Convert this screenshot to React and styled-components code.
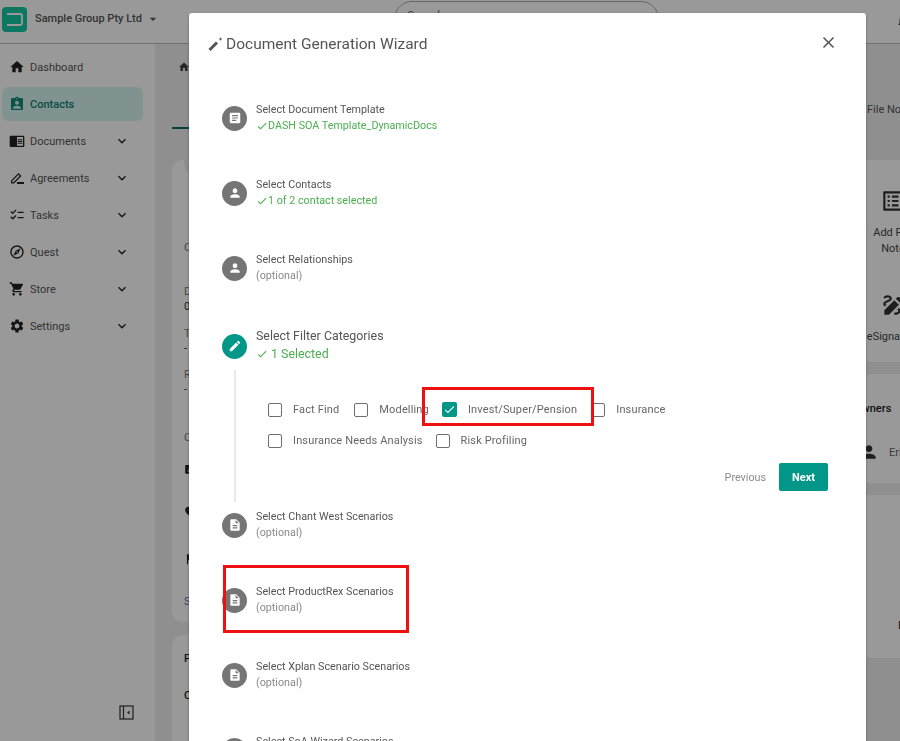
import React from "react"
import styled, { createGlobalStyle } from "styled-components"
import { MdHome, MdAssignmentInd, MdClose, MdPerson, MdEdit, MdCheck, MdDescription, MdArticle, MdShoppingCart, MdSettings, MdExpandMore, MdArrowDropDown, MdOutlineExplore, MdChecklist, MdListAlt, MdDraw, MdChromeReaderMode, MdBadge, MdFavorite, MdFlag, MdNotifications } from "react-icons/md"

const Global = createGlobalStyle`
	html, body { margin: 0; padding: 0; height: 100%; overflow: hidden; }
	body { font-family: Roboto, "Liberation Sans", sans-serif; color: #333; background: #fff; }
	* { box-sizing: border-box; }
`

const Page = styled.div`
	height: 741px;
	width: 900px;
	overflow: hidden;
	display: flex;
	flex-direction: column;
	background: #fff;
`

const Topbar = styled.header`
	height: 44px;
	flex: none;
	display: flex;
	align-items: center;
	padding-left: 2px;
	border-bottom: 1px solid #bbb;
	overflow: hidden;
`

const Logo = styled.svg`
	width: 25px;
	height: 25px;
	flex: none;
	margin-top: -5px;
`

const Company = styled.span`
	margin: -6px 0 0 8px;
	font-size: 11px;
	font-weight: 500;
	color: #555;
	white-space: nowrap;
	flex: none;
`

const Caret = styled(MdArrowDropDown)`
	flex: none;
	font-size: 16px;
	color: #555;
	margin: -6px 0 0 3px;
`

const Search = styled.div`
	margin: -6px 0 0 233px;
	width: 265px;
	height: 36px;
	border: 1px solid #aaa;
	border-radius: 18px;
	flex: none;
	padding: 7px 12px;
	font-size: 12px;
	color: #777;
`

const TopIcon = styled(MdNotifications)`
	flex: none;
	margin: -2px 0 0 237px;
	font-size: 14px;
	color: #444;
`

const Body = styled.div`
	flex: 1;
	display: flex;
	min-height: 0;
`

const Sidebar = styled.nav`
	width: 155px;
	flex: none;
	padding-top: 6px;
	display: flex;
	flex-direction: column;
	gap: 3px;
	position: relative;
`

const NavItem = styled.div`
	height: 34px;
	margin: 0 12px 0 2px;
	padding: 0 13px 0 7px;
	border-radius: 7px;
	display: flex;
	align-items: center;
	font-size: 11px;
	color: ${props => (props.active ? "#0f7f6f" : "#555")};
	background: ${props => (props.active ? "#d5f5f1" : "transparent")};
	font-weight: ${props => (props.active ? 500 : 400)};
	> svg:first-child {
		width: 16px;
		height: 16px;
		color: ${props => (props.active ? "#0f8a78" : "#222")};
		margin-right: 5px;
		flex: none;
	}
`

const NavLabel = styled.span`
	flex: 1;
`

const Collapse = styled.svg`
	position: absolute;
	left: 119px;
	bottom: 21px;
	width: 15px;
	height: 15px;
`

const Main = styled.main`
	flex: 1;
	min-width: 0;
	background: #eee;
	padding: 0 0 0 17px;
	overflow: hidden;
`

const Crumb = styled.div`
	height: 46px;
	padding: 17px 0 0 6px;
	color: #444;
	font-size: 12px;
`

const Tabs = styled.div`
	height: 39px;
	display: flex;
	align-items: center;
	font-size: 11px;
	color: #555;
`

const ActiveTab = styled.div`
	width: 100px;
	height: 39px;
	flex: none;
	border-bottom: 2px solid #0f6f60;
`

const TabLabel = styled.span`
	white-space: nowrap;
	margin-left: 595px;
`

const Columns = styled.div`
	display: grid;
	grid-template-columns: 600px 300px;
	column-gap: 24px;
	margin-top: 31px;
	align-items: start;
`

const Stack = styled.div`
	display: flex;
	flex-direction: column;
`

const Card = styled.section`
	background: #fff;
	border-radius: 10px;
	height: ${props => props.h}px;
	margin-bottom: ${props => props.mb || 12}px;
	padding: ${props => props.pad || "0"};
	font-size: 11px;
	color: #666;
	position: relative;
	overflow: hidden;
`

const Avatar = styled.div`
	position: absolute;
	left: 12px;
	top: -20px;
	width: 42px;
	height: 42px;
	border-radius: 50%;
	background: #eee;
`

const Field = styled.div`
	line-height: 13px;
	margin-bottom: ${props => props.mb || 0}px;
	color: ${props => props.color || "#777"};
	font-weight: ${props => props.weight || 400};
`

const InfoIcon = styled.div`
	height: 14px;
	font-size: 14px;
	color: #222;
	margin-bottom: ${props => props.mb}px;
	svg { display: block; }
`

const ActionGrid = styled.div`
	display: grid;
	grid-template-columns: 90px;
	row-gap: 35px;
	padding: 28px 0 0 52px;
`

const Action = styled.div`
	display: flex;
	flex-direction: column;
	align-items: center;
	text-align: center;
	font-size: 11px;
	line-height: 16px;
	color: #444;
	svg { font-size: 26px; color: #333; margin-bottom: 11px; }
`

const OwnerRow = styled.div`
	display: flex;
	align-items: center;
	gap: 10px;
	margin-top: 27px;
	padding-left: 5px;
	color: #666;
	svg { font-size: 20px; color: #333; flex: none; }
`

const Backdrop = styled.div`
	position: fixed;
	inset: 0;
	background: rgba(0, 0, 0, 0.4);
	overflow: hidden;
`

const Modal = styled.div`
	position: absolute;
	left: 189px;
	top: 13px;
	width: 677px;
	height: 800px;
	background: #fff;
	border-radius: 3px;
	box-shadow: 0 1px 3px rgba(0, 0, 0, 0.35);
`

const ModalHead = styled.div`
	height: 60px;
	display: flex;
	align-items: center;
	padding: 1px 28px 0 18px;
`

const ModalTitle = styled.h2`
	flex: 1;
	margin: 0;
	font-size: 15.5px;
	font-weight: 400;
	color: #555;
	display: flex;
	align-items: center;
	gap: 3px;
`

const Wand = styled.svg`
	width: 16px;
	height: 16px;
	flex: none;
`

const Close = styled(MdClose)`
	font-size: 19px;
	color: #555;
	margin-top: -3px;
`

const Steps = styled.div`
	padding: 28px 33px 0 33px;
	display: flex;
	flex-direction: column;
`

const Step = styled.div`
	display: flex;
	align-items: center;
	gap: 9px;
	height: 34px;
	margin-bottom: ${props => props.mb ?? 41}px;
`

const StepIcon = styled.div`
	width: 25px;
	height: 25px;
	border-radius: 50%;
	flex: none;
	background: ${props => (props.current ? "#009688" : "#757575")};
	color: #fff;
	display: flex;
	align-items: center;
	justify-content: center;
	font-size: 14px;
`

const StepText = styled.div`
	font-size: ${props => (props.current ? "12.4px" : "10.75px")};
	line-height: 16px;
	color: #555;
`

const StepSub = styled.div`
	font-size: ${props => (props.current ? "12.4px" : "10.75px")};
	line-height: ${props => (props.current ? "20px" : "16px")};
	color: ${props => (props.done ? "#4caf50" : "#8a8a8a")};
	display: flex;
	align-items: center;
	gap: ${props => (props.current ? "3px" : "0")};
	svg { font-size: 12px; }
`

const StepBody = styled.div`
	margin: 7px 0 6px 12px;
	border-left: 2px solid #e8e8e8;
	height: 132px;
	padding: 24px 5px 0 32px;
`

const CheckRow = styled.div`
	display: flex;
	align-items: center;
	height: 31px;
`

const CheckItem = styled.label`
	display: flex;
	align-items: center;
	font-size: 11px;
	color: #666;
	letter-spacing: 0.15px;
	white-space: nowrap;
	margin-right: ${props => props.mr || 0}px;
`

const Box = styled.span`
	width: ${props => (props.checked ? 15 : 14)}px;
	height: ${props => (props.checked ? 15 : 14)}px;
	flex: none;
	margin-right: ${props => props.gap || 11}px;
	border: ${props => (props.checked ? "0" : "1.5px solid #6e6e6e")};
	border-radius: 2px;
	background: ${props => (props.checked ? "#009688" : "#fff")};
	color: #fff;
	display: flex;
	align-items: center;
	justify-content: center;
	font-size: 13px;
`

const Actions = styled.div`
	display: flex;
	justify-content: flex-end;
	align-items: center;
	gap: 13px;
	margin-top: 7px;
`

const Prev = styled.span`
	font-size: 10.75px;
	color: #8a8a8a;
`

const Next = styled.button`
	width: 49px;
	height: 28px;
	border: 0;
	border-radius: 2px;
	background: #009688;
	color: #fff;
	font: 700 11px Roboto, sans-serif;
`

const Highlight = styled.div`
	position: absolute;
	left: ${props => props.x}px;
	top: ${props => props.y}px;
	width: ${props => props.w}px;
	height: ${props => props.h}px;
	border: 3px solid #ee1111;
	pointer-events: none;
`

const PenIcon = () => (
	<svg viewBox="0 0 16 16">
		<path d="M2 13.5v-3L9.5 3l3 3L5 13.5zM3.2 12.3h1.2l6.4-6.3-1.3-1.3-6.3 6.4z" fill="currentColor" fillRule="evenodd" />
		<rect x="8" y="12" width="7" height="2" fill="currentColor" />
	</svg>
)

const nav = [
	{ label: "Dashboard", icon: MdHome },
	{ label: "Contacts", icon: MdAssignmentInd, active: true },
	{ label: "Documents", icon: MdChromeReaderMode, more: true },
	{ label: "Agreements", icon: PenIcon, more: true },
	{ label: "Tasks", icon: MdChecklist, more: true },
	{ label: "Quest", icon: MdOutlineExplore, more: true },
	{ label: "Store", icon: MdShoppingCart, more: true },
	{ label: "Settings", icon: MdSettings, more: true }
]

const optional = ["Select Chant West Scenarios", "Select ProductRex Scenarios", "Select Xplan Scenario Scenarios", "Select SoA Wizard Scenarios"]

const App = () => (
	<>
		<Global />
		<Page>
			<Topbar>
				<Logo viewBox="0 0 25 25">
					<rect width="25" height="25" rx="4" fill="#15c9a2" />
					<path d="M5 7h13a2 2 0 0 1 2 2v7a2 2 0 0 1-2 2H5" fill="none" stroke="#fff" strokeWidth="1.8" />
				</Logo>
				<Company>Sample Group Pty Ltd</Company>
				<Caret />
				<Search>Search</Search>
				<TopIcon />
			</Topbar>
			<Body>
				<Sidebar>
					{nav.map(item => (
						<NavItem key={item.label} active={item.active}>
							<item.icon />
							<NavLabel>{item.label}</NavLabel>
							{item.more && <MdExpandMore size={16} color="#222" />}
						</NavItem>
					))}
					<Collapse viewBox="0 0 15 15">
						<rect x="1" y="1" width="13" height="13" fill="none" stroke="#333" strokeWidth="1.2" />
						<path d="M4.5 1v13" stroke="#333" strokeWidth="1.2" />
						<path d="M10.5 5.5v4L8 7.5z" fill="#333" />
					</Collapse>
				</Sidebar>
				<Main>
					<Crumb><MdHome /></Crumb>
					<Tabs>
						<ActiveTab />
						<TabLabel>File Notes</TabLabel>
					</Tabs>
					<Columns>
						<Stack>
							<Card h={462} mb={13} pad="81px 0 0 12px">
								<Avatar />
								<Field mb={31}>C</Field>
								<Field mb={2}>D</Field>
								<Field mb={14} color="#333">0</Field>
								<Field mb={2}>T</Field>
								<Field mb={13} color="#333">-</Field>
								<Field mb={2}>R</Field>
								<Field mb={35} color="#333">-</Field>
								<Field mb={17}>C</Field>
								<InfoIcon mb={30}><MdBadge /></InfoIcon>
								<InfoIcon mb={33}><MdFavorite /></InfoIcon>
								<InfoIcon mb={29}><MdFlag /></InfoIcon>
								<Field color="#3f6fc4">S</Field>
							</Card>
							<Card h={200} pad="17px 0 0 12px">
								<Field mb={24} color="#222" weight={500}>P</Field>
								<Field color="#222" weight={500}>C</Field>
							</Card>
						</Stack>
						<Stack>
							<Card h={202}>
								<ActionGrid>
									<Action><MdListAlt />Add File<br />Note</Action>
									<Action><MdDraw />eSignature</Action>
								</ActionGrid>
							</Card>
							<Card h={109} pad="28px 0 0 58px">
								<Field color="#222" weight={500}>Owners</Field>
								<OwnerRow><MdPerson />Eric</OwnerRow>
							</Card>
							<Card h={163} pad="124px 0 0 102px">
								<Field color="#222">D</Field>
							</Card>
						</Stack>
					</Columns>
				</Main>
			</Body>
			<Backdrop>
				<Modal>
					<ModalHead>
						<ModalTitle>
							<Wand viewBox="0 0 16 16">
								<path d="M2.5 14 10 6.5" stroke="#555" strokeWidth="3" fill="none" />
								<path d="M13.5 1.5v3M12 3h3" stroke="#555" strokeWidth="0.9" fill="none" />
							</Wand>
							Document Generation Wizard
						</ModalTitle>
						<Close />
					</ModalHead>
					<Steps>
						<Step>
							<StepIcon><MdArticle /></StepIcon>
							<div>
								<StepText>Select Document Template</StepText>
								<StepSub done><MdCheck />DASH SOA Template_DynamicDocs</StepSub>
							</div>
						</Step>
						<Step>
							<StepIcon><MdPerson /></StepIcon>
							<div>
								<StepText>Select Contacts</StepText>
								<StepSub done><MdCheck />1 of 2 contact selected</StepSub>
							</div>
						</Step>
						<Step mb={44}>
							<StepIcon><MdPerson /></StepIcon>
							<div>
								<StepText>Select Relationships</StepText>
								<StepSub>(optional)</StepSub>
							</div>
						</Step>
						<Step mb={0}>
							<StepIcon current><MdEdit /></StepIcon>
							<div>
								<StepText current>Select Filter Categories</StepText>
								<StepSub done current><MdCheck />1 Selected</StepSub>
							</div>
						</Step>
						<StepBody>
							<CheckRow>
								<CheckItem mr={15}><Box />Fact Find</CheckItem>
								<CheckItem mr={13}><Box />Modelling</CheckItem>
								<CheckItem mr={14}><Box checked><MdCheck /></Box>Invest/Super/Pension</CheckItem>
								<CheckItem><Box />Insurance</CheckItem>
							</CheckRow>
							<CheckRow>
								<CheckItem mr={13}><Box />Insurance Needs Analysis</CheckItem>
								<CheckItem><Box />Risk Profiling</CheckItem>
							</CheckRow>
							<Actions>
								<Prev>Previous</Prev>
								<Next>Next</Next>
							</Actions>
						</StepBody>
						{optional.map(title => (
							<Step key={title}>
								<StepIcon><MdDescription /></StepIcon>
								<div>
									<StepText>{title}</StepText>
									<StepSub>(optional)</StepSub>
								</div>
							</Step>
						))}
					</Steps>
					<Highlight x={233} y={374} w={172} h={39} />
					<Highlight x={34} y={552} w={186} h={68} />
				</Modal>
			</Backdrop>
		</Page>
	</>
)

export default App
